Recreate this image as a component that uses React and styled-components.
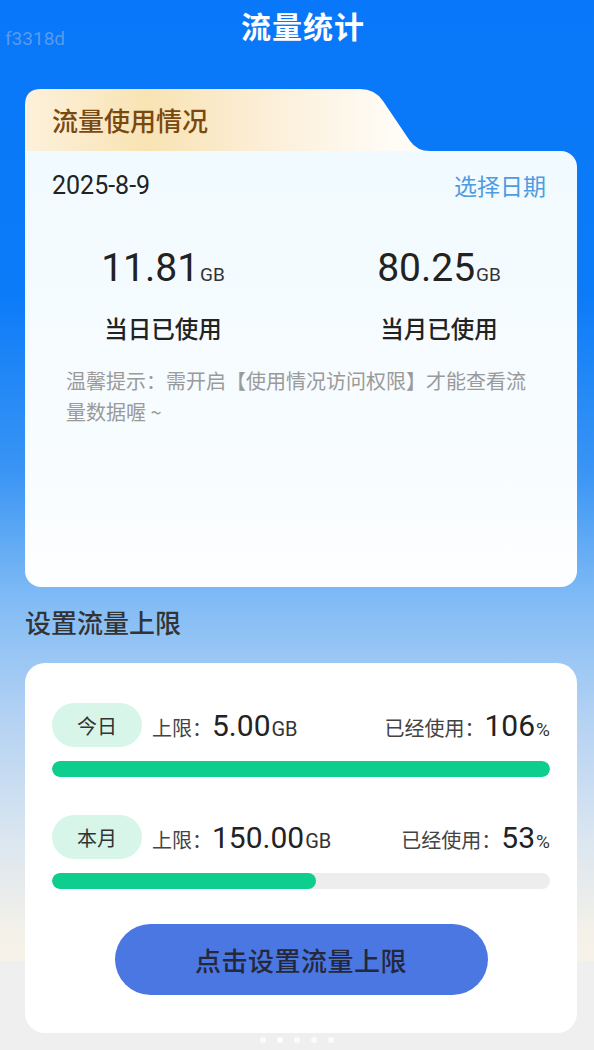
import React from "react";
import styled, { createGlobalStyle } from "styled-components";

const GlobalStyle = createGlobalStyle`
  html, body {
    margin: 0;
    padding: 0;
  }
  body {
    font-family: "Noto Sans CJK SC", "Noto Sans", sans-serif;
    color: #222;
  }
`;

const Page = styled.div`
  position: relative;
  min-height: 1050px;
  padding: 0 17px 0 25px;
  box-sizing: border-box;
  background: linear-gradient(
    180deg,
    #0877f9 0%,
    #0c7bf8 28%,
    #3a95f4 45%,
    #80bbf5 57%,
    #b2d1f3 68%,
    #dbe6f0 80%,
    #f4f1e8 89%,
    #f6f2e9 91.5%,
    #efefef 91.6%,
    #efefef 100%
  );
`;

const Watermark = styled.div`
  position: absolute;
  left: 5px;
  top: 27px;
  font-family: Roboto, "Noto Sans", sans-serif;
  font-size: 19px;
  color: rgba(170, 190, 220, 0.5);
`;

const Header = styled.div`
  height: 50px;
  display: flex;
  justify-content: center;
  align-items: center;
  padding-left: 4px;
`;

const Title = styled.h1`
  margin: 0;
  font-size: 30px;
  font-weight: 700;
  color: #fff;
  letter-spacing: 1px;
`;

const UsageCard = styled.div`
  margin-top: 39px;
  display: flex;
  flex-direction: column;
`;

const Tab = styled.div`
  width: 410px;
  height: 62px;
  display: flex;
  align-items: center;
  padding-left: 27px;
  padding-bottom: 2px;
  box-sizing: border-box;
  background: linear-gradient(90deg, #fdf1dc 0%, #f8e3b3 30%, #fcefd9 60%, #fffcf6 90%);
  clip-path: path("M0,62 L0,16 Q0,0 16,0 L335,0 Q350,0 358,12 L385,52 Q392,62 405,62 Z");
  font-size: 26px;
  font-weight: 500;
  color: #7a4811;
`;

const CardBody = styled.div`
  height: 436px;
  border-radius: 0 16px 16px 16px;
  background: linear-gradient(180deg, #f1fafe 0%, #f7fcff 60%, #fdfeff 100%);
  padding-top: 19px;
  box-sizing: border-box;
`;

const DateRow = styled.div`
  display: flex;
  justify-content: space-between;
  align-items: center;
  height: 30px;
  padding: 0 31px 0 27px;
`;

const DateText = styled.span`
  font-family: Roboto, "Noto Sans", sans-serif;
  font-size: 25px;
  color: #222;
`;

const PickDate = styled.span`
  font-size: 23px;
  color: #4f9be0;
`;

const Stats = styled.div`
  display: grid;
  grid-template-columns: 1fr 1fr;
  margin-top: 46px;
`;

const Stat = styled.div`
  display: flex;
  flex-direction: column;
  align-items: center;
  gap: 23px;
`;

const Amount = styled.div`
  display: flex;
  align-items: baseline;
  height: 44px;
  line-height: 44px;
`;

const BigNumber = styled.span`
  font-family: Roboto, "Noto Sans", sans-serif;
  font-size: ${(p) => p.size || 39}px;
  font-weight: 400;
  color: #222;
`;

const Unit = styled.span`
  font-family: Roboto, "Noto Sans", sans-serif;
  font-size: ${(p) => p.size || 19}px;
  color: #333;
  margin-left: 1px;
`;

const StatLabel = styled.div`
  font-size: 23.5px;
  font-weight: 500;
  line-height: 30px;
  color: #222;
`;

const Notice = styled.p`
  margin: 22px 0 0;
  padding: 0 46px 0 41px;
  font-size: 20px;
  line-height: 31px;
  color: #9a9a9a;
`;

const SectionTitle = styled.h2`
  margin: 18px 0 0;
  font-size: 26px;
  line-height: 34px;
  font-weight: 500;
  color: #333;
`;

const LimitCard = styled.div`
  margin-top: 24px;
  background: #fff;
  border-radius: 20px;
  padding: 40px 27px 38px;
  display: flex;
  flex-direction: column;
`;

const LimitRow = styled.div`
  display: flex;
  align-items: center;
  height: 44px;
  margin-top: ${(p) => (p.first ? 0 : 38)}px;
`;

const Pill = styled.span`
  width: 90px;
  height: 44px;
  border-radius: 22px;
  background: #d8f5ea;
  display: flex;
  align-items: center;
  justify-content: center;
  font-size: 20px;
  color: #333;
  margin-right: 10px;
`;

const Field = styled.div`
  display: flex;
  align-items: baseline;
  margin-left: ${(p) => (p.right ? "auto" : "0")};
`;

const FieldLabel = styled.span`
  font-size: 20px;
  color: #444;
`;

const Bar = styled.div`
  margin-top: 14px;
  height: 16px;
  border-radius: 8px;
  background: #ededed;
  overflow: hidden;
`;

const BarFill = styled.div`
  height: 100%;
  border-radius: 8px;
  background: #0dcd8f;
`;

const SetButton = styled.button`
  margin: 35px auto 0;
  width: 373px;
  height: 71px;
  border: none;
  border-radius: 36px;
  background: #4a77e2;
  font-family: "Noto Sans CJK SC", "Noto Sans", sans-serif;
  font-size: 26px;
  font-weight: 500;
  color: #24283a;
  letter-spacing: 0.5px;
`;

const Dots = styled.div`
  display: flex;
  justify-content: center;
  gap: 11px;
  padding: 4px 8px 0 0;
`;

const Dot = styled.span`
  width: 6px;
  height: 6px;
  border-radius: 50%;
  background: ${(p) => (p.active ? "#ffffff" : "rgba(255,255,255,0.75)")};
`;

const limits = [
  { tag: "今日", limit: "5.00", used: 106 },
  { tag: "本月", limit: "150.00", used: 53 },
];

function App() {
  return (
    <Page>
      <GlobalStyle />
      <Watermark>f3318d</Watermark>
      <Header>
        <Title>流量统计</Title>
      </Header>

      <UsageCard>
        <Tab>流量使用情况</Tab>
        <CardBody>
          <DateRow>
            <DateText>2025-8-9</DateText>
            <PickDate>选择日期</PickDate>
          </DateRow>
          <Stats>
            <Stat>
              <Amount>
                <BigNumber>11.81</BigNumber>
                <Unit>GB</Unit>
              </Amount>
              <StatLabel>当日已使用</StatLabel>
            </Stat>
            <Stat>
              <Amount>
                <BigNumber>80.25</BigNumber>
                <Unit>GB</Unit>
              </Amount>
              <StatLabel>当月已使用</StatLabel>
            </Stat>
          </Stats>
          <Notice>温馨提示：需开启【使用情况访问权限】才能查看流量数据喔 ~</Notice>
        </CardBody>
      </UsageCard>

      <SectionTitle>设置流量上限</SectionTitle>

      <LimitCard>
        {limits.map((it, i) => (
          <React.Fragment key={it.tag}>
            <LimitRow first={i === 0}>
              <Pill>{it.tag}</Pill>
              <Field>
                <FieldLabel>上限：</FieldLabel>
                <BigNumber size={30}>{it.limit}</BigNumber>
                <Unit size={20}>GB</Unit>
              </Field>
              <Field right>
                <FieldLabel>已经使用：</FieldLabel>
                <BigNumber size={30}>{it.used}</BigNumber>
                <Unit size={19}>%</Unit>
              </Field>
            </LimitRow>
            <Bar>
              <BarFill style={{ width: Math.min(it.used, 100) + "%" }} />
            </Bar>
          </React.Fragment>
        ))}
        <SetButton>点击设置流量上限</SetButton>
      </LimitCard>

      <Dots>
        <Dot />
        <Dot active />
        <Dot />
        <Dot />
        <Dot />
      </Dots>
    </Page>
  );
}

export default App;
